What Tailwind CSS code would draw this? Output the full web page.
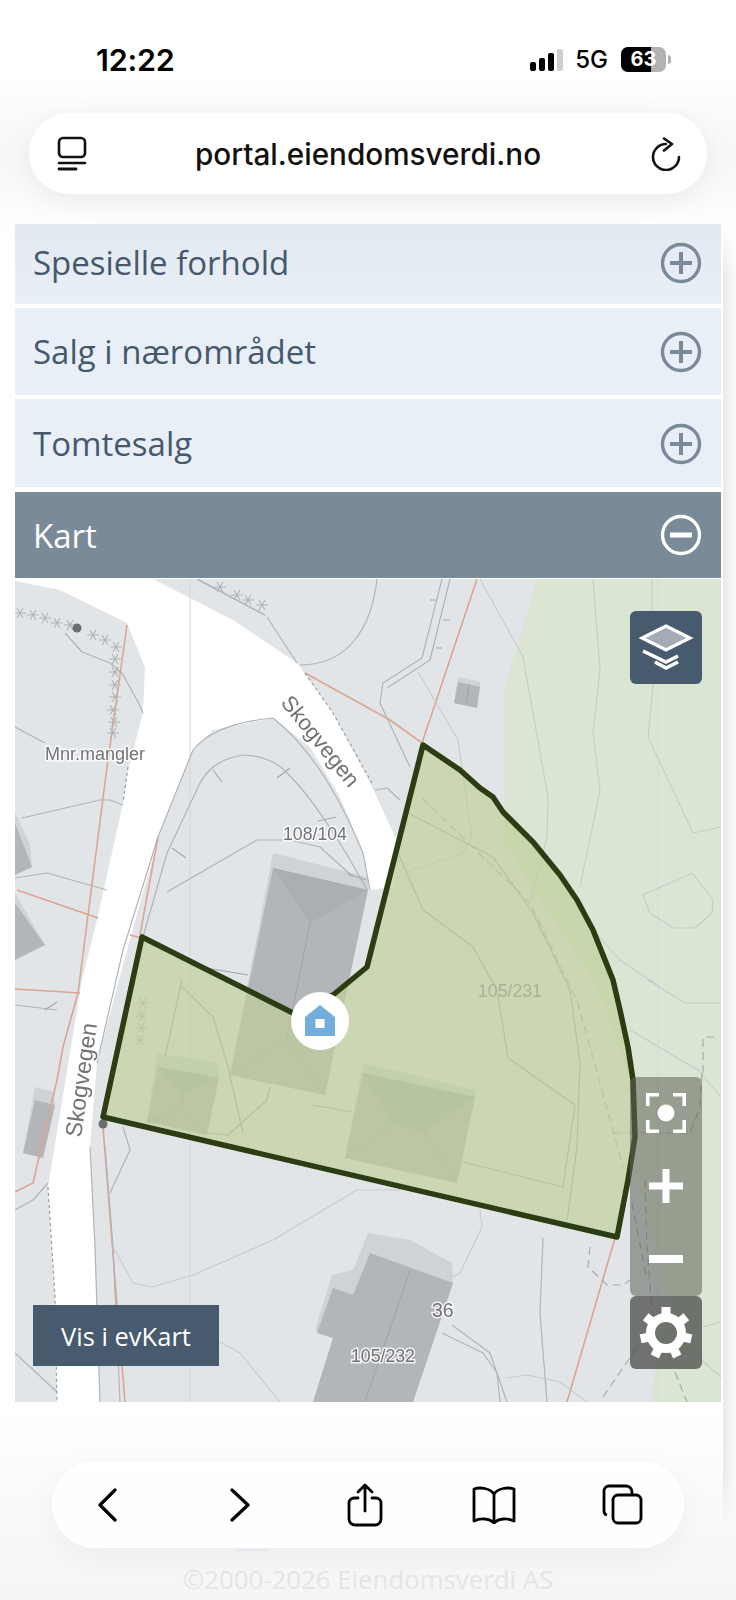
<!DOCTYPE html>
<html lang="en">
<head>
  <meta charset="UTF-8" />
  <meta name="viewport" content="width=device-width, initial-scale=1.0" />
  <title>portal.eiendomsverdi.no</title>
  <script src="https://cdn.jsdelivr.net/npm/@tailwindcss/browser@4"></script>
</head>
<body class="bg-white">
  <div class="relative w-[736px] h-[1600px] overflow-hidden bg-white font-['Open_Sans',sans-serif]">
    <!-- fog behind the browser bars -->
    <div class="absolute left-0 top-[70px] w-full h-[170px] bg-gradient-to-b from-white via-[#f7f7f7] to-white"></div>
    <div class="absolute left-0 top-[1402px] w-full h-[198px] bg-gradient-to-b from-white to-[#f5f5f5]"></div>
    <div class="absolute left-[723px] top-[225px] w-[13px] h-[1300px] bg-gradient-to-r from-[#e9e9e9] to-[#fafafa] [mask-image:linear-gradient(to_bottom,transparent,black_4%,black_96%,transparent)]"></div>

    <!-- status bar -->
    <div class="relative h-[113px] flex items-start font-['Inter',sans-serif] text-black">
      <span class="ml-[96px] mt-[42px] text-[30.5px] leading-[36px] font-semibold tracking-[-0.2px]">12:22</span>
      <div class="ml-auto mt-[48px] flex items-end gap-[3px] h-[23px]">
        <span class="w-[6px] h-[9px] rounded-[2px] bg-black"></span>
        <span class="w-[6px] h-[13px] rounded-[2px] bg-black"></span>
        <span class="w-[6px] h-[18px] rounded-[2px] bg-black"></span>
        <span class="w-[6px] h-[22px] rounded-[2px] bg-[#cfcfcf]"></span>
      </div>
      <span class="ml-[12px] mt-[45px] text-[24px] leading-[30px] font-medium">5G</span>
      <div class="relative ml-[13px] mt-[47px] w-[45px] h-[25px] rounded-[7px] bg-[#b2b2b2] overflow-hidden">
        <div class="absolute left-0 top-0 w-[30px] h-full bg-black"></div>
        <span class="absolute inset-0 text-center text-white text-[20px] leading-[25px] font-bold">63</span>
      </div>
      <span class="ml-[2px] mt-[55px] mr-[65px] w-[3px] h-[9px] rounded-r-full bg-[#b2b2b2]"></span>
    </div>

    <!-- url bar -->
    <div class="relative mx-[29px] h-[81px] rounded-[40px] bg-white shadow-[0_6px_28px_rgba(0,0,0,0.07)] flex items-center pl-[28px] pr-[26px] font-['Inter',sans-serif]">
      <svg class="w-[30px] h-[35px]" viewBox="0 0 30 35" fill="none" stroke="#111" stroke-linecap="round">
        <rect x="2" y="2" width="26" height="19" rx="4" stroke-width="2.6"/>
        <path d="M2 27H28" stroke-width="2.6"/>
        <path d="M2 33H19" stroke-width="2.8"/>
      </svg>
      <span class="flex-1 text-center text-[29.7px] leading-[40px] font-medium text-[#111] pr-[2px]">portal.eiendomsverdi.no</span>
      <svg class="w-[30px] h-[34px]" viewBox="0 0 30 34" fill="none" stroke="#111" stroke-width="2.6" stroke-linecap="round" stroke-linejoin="round">
        <path d="M15 7A13 13 0 1 0 28 20"/>
        <path d="M13 1.500L21 7L13 13.500"/>
      </svg>
    </div>

    <!-- accordion -->
    <div class="relative mt-[30px] mx-[15px] flex flex-col">
      <div class="h-[80px] pb-[3px] bg-gradient-to-b from-[#e3e9f1] to-[#e8eff7] flex items-center justify-between pl-[18px] pr-[19px]">
        <span class="text-[33px] leading-[44px] text-[#46586c]">Spesielle forhold</span>
        <svg class="w-[42px] h-[42px] mt-[1px]" viewBox="0 0 42 42" fill="none" stroke="#7a8a9a"><circle cx="21" cy="21" r="18.5" stroke-width="3.4"/><path d="M10 21H32M21 10V32" stroke-width="4"/></svg>
      </div>
      <div class="mt-[4px] h-[87px] bg-[#e8eff7] flex items-center justify-between pl-[18px] pr-[19px]">
        <span class="text-[33px] leading-[44px] text-[#46586c] mt-[1px]">Salg i nærområdet</span>
        <svg class="w-[42px] h-[42px]" viewBox="0 0 42 42" fill="none" stroke="#7a8a9a"><circle cx="21" cy="21" r="18.5" stroke-width="3.4"/><path d="M10 21H32M21 10V32" stroke-width="4"/></svg>
      </div>
      <div class="mt-[4px] h-[88px] bg-[#e8eff7] flex items-center justify-between pl-[18px] pr-[19px]">
        <span class="text-[33px] leading-[44px] text-[#46586c] mt-[2px]">Tomtesalg</span>
        <svg class="w-[42px] h-[42px] mt-[1px]" viewBox="0 0 42 42" fill="none" stroke="#7a8a9a"><circle cx="21" cy="21" r="18.5" stroke-width="3.4"/><path d="M10 21H32M21 10V32" stroke-width="4"/></svg>
      </div>
      <div class="mt-[5px] h-[86px] bg-[#7b8a99] flex items-center justify-between pl-[18px] pr-[19px]">
        <span class="text-[33px] leading-[44px] text-white mt-[1px]">Kart</span>
        <svg class="w-[42px] h-[42px]" viewBox="0 0 42 42" fill="none" stroke="#fff"><circle cx="21" cy="21" r="18.5" stroke-width="3.4"/><path d="M10 21H32" stroke-width="5"/></svg>
      </div>

      <!-- map -->
      <div class="relative mt-[1px] h-[823px] overflow-hidden bg-[#e2e5e8]">
        <svg class="absolute inset-0 w-[706px] h-[823px] blur-[0.5px]" viewBox="15 579 706 823" fill="none">
          <defs>
            <path id="fx" d="M-6 0H6M-3 -5L3 5M3 -5L-3 5" stroke-width="1.1"/>
          </defs>
          <!-- forest -->
          <path d="M537 579L520 637L504 690V843L597 987L630 1080L633 1165L667 1297L650 1402H721V579Z" fill="#dae6d3"/>
          <!-- road -->
          <path d="M15 579H153L233 620L297 663L333 713L370 783L398 843L393 887L370 890L363 853L340 797L310 747L273 718L213 730L193 750L160 833L140 903L117 987L97 1063L90 1147L95 1247L100 1402H57L55 1297L48 1187L82 980L97 920L123 803L128 770L143 713L145 667L127 623L60 590L15 581Z" fill="#fff"/>
          <!-- tile seams -->
          <path d="M190 579V1402M658 579V1402" stroke="#d3d6d9" stroke-width="1"/>
          <!-- building shadows -->
          <g fill="#cfd2d6">
            <path d="M273 853L368 877V890L325 1095L230 1075Z"/>
            <path d="M157 1053L218 1063L219 1078L207 1135L147 1122Z"/>
            <path d="M363 1063L475 1090V1097L457 1183L345 1158Z"/>
            <path d="M368 1233L410 1240L452 1263L453 1283L413 1402H313L333 1338L315 1330L332 1275L353 1270Z"/>
            <path d="M35 1087L53 1092L55 1105L43 1158L23 1153Z"/>
            <path d="M15 812L30 845L32 867L15 875ZM15 893L45 945L15 960Z"/>
            <path d="M458 677L480 682V687L477 708L454 703Z"/>
          </g>
          <!-- building roofs -->
          <g fill="#b2b5b9">
            <path d="M273 868L368 890L325 1095L230 1075Z"/>
            <path d="M158 1067L219 1078L207 1135L147 1122Z"/>
            <path d="M363 1073L475 1097L457 1183L345 1158Z"/>
            <path d="M370 1253L453 1283L413 1402H313L333 1338L317 1333L333 1288L353 1295Z"/>
            <path d="M35 1100L55 1105L43 1158L23 1153Z"/>
            <path d="M15 823L32 867L15 875ZM15 903L45 945L15 960Z"/>
            <path d="M458 682L480 687L477 708L454 703Z"/>
          </g>
          <path d="M273 868L368 890L310 923Z" fill="#abaeb2"/>
          <path d="M158 1067L219 1078L182 1095ZM363 1073L475 1097L425 1132L393 1125Z" fill="#abaeb2"/>
          <g stroke="#9fa2a6" stroke-width="1">
            <path d="M310 923L287 1038M287 1038L230 1075M287 1038L325 1095"/>
            <path d="M182 1095V1108L147 1122M182 1108L207 1135"/>
            <path d="M393 1125L345 1158M425 1132L457 1183"/>
            <path d="M410 1270L365 1402M469 684L466 705"/>
          </g>
          <!-- property lines -->
          <g stroke="#dba592" stroke-width="1.6">
            <path d="M127 625L107 767L87 923L78 993L63 1047L57 1080L33 1183L15 1192"/>
            <path d="M15 989L80 993M17 890L98 918M158 837L140 935M130 935L142 938"/>
            <path d="M305 673L390 720L422 743L477 579"/>
            <path d="M103 1127L117 1305L125 1402M615 1238L567 1402"/>
          </g>
          <!-- contours and edges -->
          <g stroke="#b0b3b7" stroke-width="1.2" stroke-linejoin="round">
            <path d="M197 579L265 615" stroke-width="1.6"/>
            <path d="M267 617L297 663"/>
            <path d="M377 579C372 625 350 665 300 665"/>
            <path d="M65 633L82 652L110 663L122 673L138 702L143 713"/>
            <path d="M15 727L45 743"/>
            <path d="M22 818L100 800H110L123 805"/>
            <path d="M15 878L47 873L107 890"/>
            <path d="M97 1063L123 950L158 837L193 750C205 735 230 722 273 718C310 747 340 797 363 853L370 890"/>
            <path d="M143 937L167 853L200 783C210 765 225 758 243 755C265 755 280 765 287 773C310 795 340 840 367 890"/>
            <path d="M167 892L257 840H290L320 847L353 877"/>
            <path d="M442 579L422 658L383 683L380 703L410 767"/>
            <path d="M450 579L430 660L387 688"/>
            <path d="M375 790L387 788L400 800"/>
            <path d="M90 1147L95 1247L100 1402M105 1147L113 1247L120 1402"/>
            <path d="M15 1210L33 1200L48 1183"/>
            <path d="M123 1127L130 1150L110 1193"/>
            <path d="M15 1353L57 1392"/>
            <path d="M15 1005L57 1010"/>
            <path d="M543 1238L540 1313L547 1402"/>
            <path d="M452 1325L490 1353L507 1402M442 1333L483 1353L497 1373L500 1402"/>
          </g>
          <g stroke="#c7cacd" stroke-width="1.1" stroke-linejoin="round">
            <path d="M480 579L523 657L548 797L547 837L530 903"/>
            <path d="M418 672L458 740L472 837L463 853L407 872"/>
            <path d="M593 579L600 670L593 733L600 790L580 887"/>
            <path d="M652 579L653 687L648 737L693 833L721 827"/>
            <path d="M643 895L692 873L713 900L712 913L695 928H673L650 913Z"/>
            <path d="M593 930L620 960L660 987M630 1030L698 1070L721 1097M648 980L685 1003H721"/>
            <path d="M113 1247L133 1283L152 1287L193 1275L273 1240L357 1190H400"/>
            <path d="M220 1342L240 1353L280 1402"/>
            <path d="M480 1210L482 1227L460 1273L452 1277"/>
            <path d="M507 1378L527 1375L560 1382L587 1402"/>
            <path d="M703 1327L721 1322M698 1357L721 1377"/>
          </g>
          <!-- inside the plot -->
          <g stroke="#a3a6a8" stroke-width="1.2" stroke-linejoin="round">
            <path d="M408 813L493 857L533 913L570 990L580 1063L577 1147L567 1220"/>
            <path d="M398 853L423 910L473 947L497 990L508 1058L575 1105L563 1187L463 1162"/>
            <path d="M182 980L165 1057M180 985L213 1017L227 1063L243 1133M270 1087L267 1100L228 1135L207 1133"/>
            <path d="M313 1105L352 1112M200 967L248 975"/>
          </g>
          <!-- dashed lines -->
          <g stroke="#a8abae" stroke-width="1.2" stroke-dasharray="8 5">
            <path d="M422 798L530 903L567 980L577 1000L623 1167"/>
            <path d="M703 1073V1037H715M702 1073L700 1107L690 1133H613"/>
            <path d="M632 1203L647 1280M645 1180L647 1247L652 1313"/>
            <path d="M590 1247L588 1267L607 1285H623L630 1280"/>
            <path d="M603 1397L640 1343M675 1372L687 1402"/>
          </g>
          <g stroke="#9a9da0" stroke-width="1.2" stroke-dasharray="3 3">
            <path d="M305 673L333 713L372 783"/>
            <path d="M128 767L123 803"/>
            <path d="M48 1187L55 1297L57 1402"/>
          </g>
          <!-- fences -->
          <g stroke="#b0b3b6">
            <use href="#fx" x="20" y="613"/><use href="#fx" x="33" y="615"/><use href="#fx" x="45" y="618"/>
            <use href="#fx" x="57" y="623"/><use href="#fx" x="70" y="625"/><use href="#fx" x="93" y="635"/>
            <use href="#fx" x="105" y="640"/><use href="#fx" x="116" y="647"/><use href="#fx" x="115" y="659"/>
            <use href="#fx" x="115" y="672"/><use href="#fx" x="115" y="685"/><use href="#fx" x="115" y="697"/>
            <use href="#fx" x="113" y="710"/><use href="#fx" x="114" y="722"/><use href="#fx" x="113" y="733"/>
            <use href="#fx" x="220" y="587"/><use href="#fx" x="237" y="595"/><use href="#fx" x="248" y="600"/>
            <use href="#fx" x="262" y="605"/>
            <use href="#fx" x="143" y="1003"/><use href="#fx" x="142" y="1016"/><use href="#fx" x="141" y="1028"/>
            <use href="#fx" x="140" y="1040"/>
          </g>
          <g stroke="#a5a8ab" stroke-width="1.2">
            <path d="M172 848L186 858M213 770L222 782M277 778L290 768M318 821L336 817M348 874L366 880"/>
            <path d="M45 1010L57 1002M430 600H436M443 620H450M436 648H442"/>
          </g>
          <circle cx="77" cy="628" r="4.5" fill="#6b6d70"/>
          <circle cx="103" cy="1124" r="4.5" fill="#6b6d70"/>

          <!-- labels -->
          <g font-family="Liberation Sans, sans-serif" fill="#707275" stroke="#fff" stroke-width="3" paint-order="stroke" stroke-opacity="0.8">
            <text x="45" y="760" font-size="18">Mnr.mangler</text>
            <text x="283" y="840" font-size="17.7">108/104</text>
            <text x="280" y="703" font-size="22" transform="rotate(51 280 703)">Skogvegen</text>
            <text x="81" y="1138" font-size="23" transform="rotate(-82 81 1138)">Skogvegen</text>
            <text x="432" y="1317" font-size="19.5">36</text>
            <text x="351" y="1362" font-size="17.7">105/232</text>
          </g>

          <!-- plot -->
          <path d="M423 745L460 770L480 788L493 797L503 812L533 842L560 875L577 900L593 930L613 980L620 1010L628 1047L633 1080L635 1137L628 1180L617 1237L103 1117L142 937L293 1013L333 995L367 967Z" fill="#bdcf97" fill-opacity="0.67" stroke="#2c3d13" stroke-width="5.5" stroke-linejoin="round"/>
          <text x="478" y="997" font-family="Liberation Sans, sans-serif" font-size="17.7" fill="#a8b298">105/231</text>
        </svg>

        <!-- map controls -->
        <div class="absolute left-[615px] top-[32px] w-[72px] h-[73px] rounded-[6px] bg-[#475a6e] flex items-center justify-center">
          <svg class="w-[56px] h-[50px]" viewBox="0 0 56 50" fill="none" stroke="#fff" stroke-linejoin="miter">
            <path d="M28 3L52 15L28 27L4 15Z" fill="#a3abb7" stroke-width="3.2"/>
            <path d="M5 28L28 39L40 33" stroke-width="3.6"/>
            <path d="M17 39L28 45L40 39" stroke-width="3.6"/>
          </svg>
        </div>
        <div class="absolute left-[615px] top-[498px] w-[72px] h-[219px] rounded-[6px] bg-[#5c6258]/55 flex flex-col items-center">
          <svg class="mt-[16px] w-[40px] h-[40px]" viewBox="0 0 40 40" fill="none" stroke="#fff" stroke-width="3.6">
            <path d="M1.8 13V1.8H13M27 1.8H38.2V13M38.2 27V38.2H27M13 38.2H1.8V27"/>
            <circle cx="20" cy="20" r="8.5" fill="#fff" stroke="none"/>
          </svg>
          <svg class="mt-[36px] w-[34px] h-[34px]" viewBox="0 0 34 34" fill="#fff"><path d="M13.5 0H20.5V13.5H34V20.5H20.5V34H13.5V20.5H0V13.5H13.5Z"/></svg>
          <span class="mt-[52px] w-[34px] h-[8px] bg-white"></span>
        </div>
        <div class="absolute left-[615px] top-[717px] w-[72px] h-[73px] rounded-[6px] bg-[#3f423e]/70 flex items-center justify-center">
          <svg class="w-[54px] h-[54px]" viewBox="-27 -27 54 54" fill="none" stroke="#fff">
            <circle r="15.5" stroke-width="9"/>
            <g stroke-width="9">
              <path d="M0 -18V-26"/>
              <path d="M0 -18V-26" transform="rotate(51.4)"/>
              <path d="M0 -18V-26" transform="rotate(102.9)"/>
              <path d="M0 -18V-26" transform="rotate(154.3)"/>
              <path d="M0 -18V-26" transform="rotate(205.7)"/>
              <path d="M0 -18V-26" transform="rotate(257.1)"/>
              <path d="M0 -18V-26" transform="rotate(308.6)"/>
            </g>
          </svg>
        </div>
        <div class="absolute left-[18px] top-[726px] w-[186px] h-[61px] bg-[#475a6e] flex items-center justify-center text-white text-[25.5px] leading-[32px]">Vis i evKart</div>
        <!-- house marker -->
        <div class="absolute left-[276px] top-[413px] w-[58px] h-[58px] rounded-full bg-white flex items-center justify-center">
          <svg class="w-[30px] h-[32px]" viewBox="0 0 30 32" fill="#74aede"><path fill-rule="evenodd" d="M15 0L30 12V31H0V12ZM10.500 14V23H19.500V14Z"/></svg>
        </div>
      </div>
    </div>

    <!-- footer under the toolbar -->
    <div class="absolute left-0 top-[1402px] w-full h-[198px]">
      <div class="absolute left-[235px] top-[118px] w-[33px] h-[29px] bg-[#f3f7fc]"></div>
      <div class="absolute left-[281px] top-[124px] w-[240px] h-[20px] bg-[#f7f9fc]"></div>
      <div class="absolute left-[236px] top-[148px] w-[33px] h-[1px] bg-[#e4e6ea]"></div>
      <p class="absolute left-0 top-[160px] w-full text-center text-[25.8px] leading-[34px] text-[#e3e5e9]">©2000-2026 Eiendomsverdi AS</p>
      <!-- safari toolbar -->
      <div class="absolute left-[52px] top-[59px] w-[632px] h-[87px] rounded-[43px] bg-white/85 shadow-[0_8px_28px_rgba(0,0,0,0.05)] flex items-center pl-[46px]">
        <svg class="w-[19px] h-[34px]" viewBox="0 0 19 34" fill="none" stroke="#000" stroke-width="3.2" stroke-linecap="round" stroke-linejoin="round"><path d="M17 2L2 17L17 32"/></svg>
        <svg class="ml-[113px] w-[20px] h-[34px]" viewBox="0 0 20 34" fill="none" stroke="#000" stroke-width="3.2" stroke-linecap="round" stroke-linejoin="round"><path d="M2 2L18 17L2 32"/></svg>
        <svg class="ml-[97px] w-[36px] h-[44px]" viewBox="0 0 36 44" fill="none" stroke="#000" stroke-width="2.8" stroke-linecap="round" stroke-linejoin="round"><path d="M11 15H7A5 5 0 0 0 2 20V36A6 6 0 0 0 8 42H28A6 6 0 0 0 34 36V20A5 5 0 0 0 29 15H25"/><path d="M18 28V3M11 9L18 2L25 9"/></svg>
        <svg class="ml-[89px] w-[44px] h-[38px]" viewBox="0 0 44 38" fill="none" stroke="#000" stroke-width="2.8" stroke-linejoin="round"><path d="M22 8C18 2 8 1 2 3V35C8 32 17 32 22 37C27 32 36 32 42 35V3C36 1 26 2 22 8Z"/><path d="M22 8V37"/></svg>
        <svg class="ml-[86px] w-[41px] h-[41px]" viewBox="0 0 41 41" fill="none" stroke="#000" stroke-width="2.8"><path d="M5 31A4 4 0 0 1 2 27V7A5 5 0 0 1 7 2H24A6 6 0 0 1 30 8V10"/><rect x="11" y="11" width="28" height="28" rx="5"/></svg>
      </div>
    </div>
  </div>
</body>
</html>
